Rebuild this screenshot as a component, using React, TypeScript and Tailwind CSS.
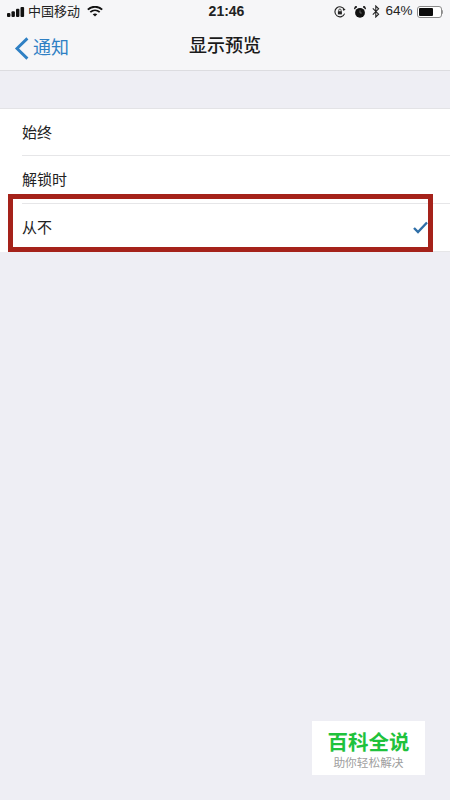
const font = { fontFamily: '"Liberation Sans", "Noto Sans CJK SC", sans-serif' };

const Signal = () => (
  <svg width="18" height="10" viewBox="0 0 18 10" fill="#111">
    <rect x="0" y="6" width="3.4" height="4" rx="1" />
    <rect x="4.5" y="4.2" width="3.4" height="5.8" rx="1" />
    <rect x="9" y="1.8" width="3.4" height="8.2" rx="1" />
    <rect x="13.5" y="0" width="3.6" height="10" rx="1" />
  </svg>
);

const Wifi = () => (
  <svg width="16" height="11" viewBox="0 0 16 11" fill="none" stroke="#111" strokeWidth="1.9">
    <path d="M0.8 3.6C5 -0.2 11 -0.2 15.2 3.6" />
    <path d="M3.3 6.1C6 3.8 10 3.8 12.7 6.1" />
    <path d="M8 10.6L5.7 8.2C7 7.2 9 7.2 10.3 8.2Z" fill="#111" stroke="none" />
  </svg>
);

const RotationLock = () => (
  <svg width="12" height="12" viewBox="0 0 12 12" fill="none" stroke="#222" strokeWidth="1.1">
    <path d="M10.6 7.6A5 5 0 1 1 10.4 3.6" />
    <path d="M11.6 3.2L9.6 5L8.6 2.8Z" fill="#222" stroke="none" />
    <rect x="3.9" y="5.2" width="4" height="3.2" fill="#222" stroke="none" />
    <path d="M4.7 5.2V4.2A1.2 1.2 0 0 1 7.1 4.2V5.2" strokeWidth="0.8" />
  </svg>
);

const Alarm = () => (
  <svg width="12" height="12" viewBox="0 0 12 12" fill="#111">
    <circle cx="6" cy="6.8" r="4.9" />
    <path d="M0.4 3L3 0.8L1.2 0.5Z M11.6 3L9 0.8L10.8 0.5Z" stroke="#111" strokeWidth="0.8" />
    <path d="M6 4.4V7H7.8" stroke="#888" strokeWidth="0.7" fill="none" />
  </svg>
);

const Bluetooth = () => (
  <svg width="8" height="13" viewBox="0 0 8 13" fill="none" stroke="#222" strokeWidth="1.1">
    <path d="M0.8 3.4L6.6 9.2L3.8 12V1L6.6 3.8L0.8 9.6" />
  </svg>
);

const Battery = () => (
  <div className="flex items-center">
    <div className="flex h-[12px] w-[25px] rounded-[3px] border border-[#8a8a8a] bg-white p-[1px]">
      <div className="h-full w-[14px] rounded-[1px] bg-[#0c0c0c]" />
    </div>
    <div className="h-[4px] w-[1.5px] rounded-r-sm bg-[#9a9a9a]" />
  </div>
);

const rows = ['始终', '解锁时', '从不'];

export default function App() {
  return (
    <div className="relative h-[800px] w-[450px] overflow-hidden bg-[#eeeef4] text-[#1a1a1a]" style={font}>
      {/* Status + nav */}
      <header className="h-[71px] border-b border-[#dcdce0] bg-[#f6f6f8]">
        <div className="flex h-[23px] items-center justify-between pl-[7px] pr-[7px]">
          <div className="flex w-[160px] items-center">
            <Signal />
            <span className="ml-[3px] text-[13px] text-[#222]">中国移动</span>
            <span className="ml-[7px]"><Wifi /></span>
          </div>
          <span className="ml-[3px] text-[14px] font-bold text-[#222]">21:46</span>
          <div className="flex w-[160px] items-center justify-end">
            <RotationLock />
            <span className="ml-[8px]"><Alarm /></span>
            <span className="ml-[6px]"><Bluetooth /></span>
            <span className="ml-[5px] text-[13.5px] text-[#222]">64%</span>
            <span className="ml-[4px]"><Battery /></span>
          </div>
        </div>
        <div className="relative flex h-[47px] items-center justify-center">
          <span className="text-[18px] font-medium">显示预览</span>
          <div className="absolute left-[14px] top-[12px] flex items-center text-[#2f80c4]">
            <svg width="15" height="23" viewBox="0 0 15 23" fill="none" stroke="#2f80c4" strokeWidth="2.9">
              <path d="M13.4 1.4L3 11.5L13.4 21.6" />
            </svg>
            <span className="ml-[4px] text-[18px]">通知</span>
          </div>
        </div>
      </header>

      {/* Option list */}
      <section className="mt-[37px] border-t border-[#e3e3e6] bg-white">
        {rows.map((row, i) => (
          <div key={row} className={`relative flex items-center pl-[22px] ${i === 0 ? 'h-[47px] pt-[2px]' : 'h-[48px]'}`}>
            <span className="text-[15px] text-[#222]">{row}</span>
            {i === 2 && (
              <svg className="absolute right-[22px] top-[17px]" width="15" height="13" viewBox="0 0 15 13" fill="none" stroke="#2f6fa8" strokeWidth="2.4">
                <path d="M1 7L5 11L14 1.5" />
              </svg>
            )}
            <div className="absolute bottom-0 left-[22px] right-0 h-px bg-[#e6e6e8]" />
          </div>
        ))}
      </section>

      {/* Red highlight */}
      <div className="absolute left-[8px] top-[194px] h-[58px] w-[425px] border-[5px] border-[#a5221a]" />

      {/* Watermark */}
      <div className="absolute left-[312px] top-[721px] flex h-[54px] w-[113px] flex-col items-center bg-white pt-[9px]">
        <span className="text-[20.5px] font-bold leading-[26px] text-[#1fc23c]">百科全说</span>
        <span className="text-[11.7px] leading-[14px] text-[#a0a0a0]">助你轻松解决</span>
      </div>
    </div>
  );
}
